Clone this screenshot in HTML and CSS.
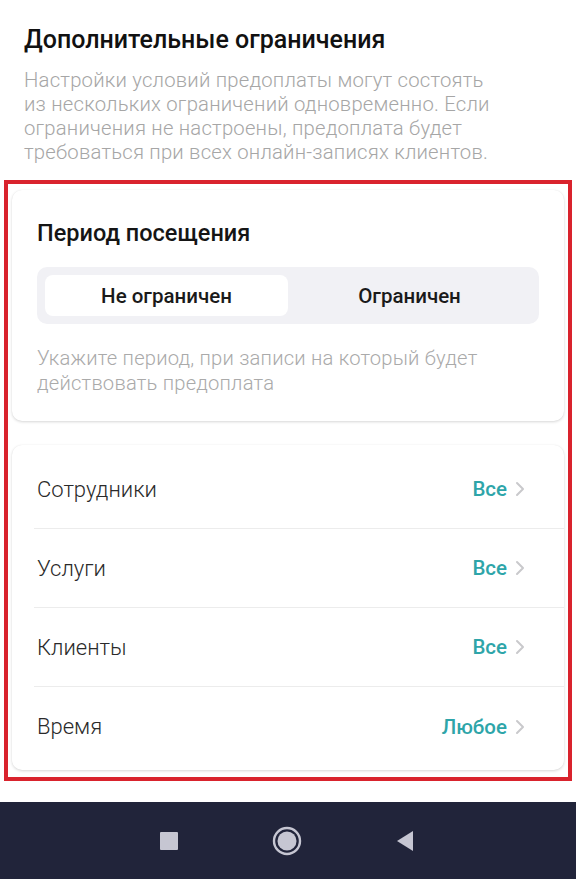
FILE: index.html
```html
<!DOCTYPE html>
<html lang="ru">
<head>
<meta charset="utf-8">
<link rel="stylesheet" href="styles.css">
</head>
<body>
<div class="page">
  <section class="intro">
    <h1 class="intro-title">Дополнительные ограничения</h1>
    <p class="intro-text">Настройки условий предоплаты могут состоять из нескольких ограничений одновременно. Если ограничения не настроены, предоплата будет требоваться при всех онлайн-записях клиентов.</p>
  </section>
  <div class="frame">
    <div class="card period">
      <h2 class="period-title">Период посещения</h2>
      <div class="segment">
        <div class="seg-item seg-active">Не ограничен</div>
        <div class="seg-item">Ограничен</div>
      </div>
      <p class="period-hint">Укажите период, при записи на который будет действовать предоплата</p>
    </div>
    <div class="card list">
      <div class="row">
        <span class="row-label">Сотрудники</span>
        <span class="row-value">Все</span>
        <svg class="chev" width="10" height="16" viewBox="0 0 10 16"><path d="M2 2 L8 8 L2 14" fill="none" stroke="#c9c9cc" stroke-width="2" stroke-linecap="round" stroke-linejoin="round"/></svg>
      </div>
      <div class="row">
        <span class="row-label">Услуги</span>
        <span class="row-value">Все</span>
        <svg class="chev" width="10" height="16" viewBox="0 0 10 16"><path d="M2 2 L8 8 L2 14" fill="none" stroke="#c9c9cc" stroke-width="2" stroke-linecap="round" stroke-linejoin="round"/></svg>
      </div>
      <div class="row">
        <span class="row-label">Клиенты</span>
        <span class="row-value">Все</span>
        <svg class="chev" width="10" height="16" viewBox="0 0 10 16"><path d="M2 2 L8 8 L2 14" fill="none" stroke="#c9c9cc" stroke-width="2" stroke-linecap="round" stroke-linejoin="round"/></svg>
      </div>
      <div class="row">
        <span class="row-label">Время</span>
        <span class="row-value">Любое</span>
        <svg class="chev" width="10" height="16" viewBox="0 0 10 16"><path d="M2 2 L8 8 L2 14" fill="none" stroke="#c9c9cc" stroke-width="2" stroke-linecap="round" stroke-linejoin="round"/></svg>
      </div>
    </div>
  </div>
  <nav class="navbar">
    <svg width="20" height="20" viewBox="0 0 20 20"><rect x="1" y="1" width="18" height="18" rx="1" fill="#c6c6d2"/></svg>
    <svg width="30" height="30" viewBox="0 0 30 30"><circle cx="15" cy="15" r="13" fill="none" stroke="#c6c6d2" stroke-width="2.4"/><circle cx="15" cy="15" r="9.5" fill="#c6c6d2"/></svg>
    <svg width="20" height="22" viewBox="0 0 20 22"><path d="M18 1 L18 21 L2 11 Z" fill="#c6c6d2"/></svg>
  </nav>
</div>
</body>
</html>
```
FILE: styles.css
```css
* { box-sizing: border-box; }
html, body { margin: 0; padding: 0; background: #ffffff; }
body { font-family: Roboto, "Noto Sans", sans-serif; width: 576px; height: 879px; overflow: hidden; }
.page { display: flex; flex-direction: column; height: 879px; }
.intro { padding: 26px 24px 0 24px; }
.intro-title { margin: 0; font-size: 25px; line-height: 28px; font-weight: 500; color: #111111; }
.intro-text { margin: 14px 0 0 0; font-size: 20.3px; line-height: 24px; font-weight: 300; letter-spacing: 0.2px; color: #a6a6a6; width: 480px; }
.frame { margin: 16px 4px 0 4px; border: 4px solid #d9232d; padding: 6px 4px 7px 4px; display: flex; flex-direction: column; gap: 24px; }
.card { background: #ffffff; border-radius: 10px; box-shadow: 0 1px 3px rgba(0,0,0,0.16), 0 0 1px rgba(0,0,0,0.06); }
.period { padding: 29px 25px 25px 25px; }
.period-title { margin: 0; font-size: 23.5px; line-height: 28px; font-weight: 500; color: #151515; }
.segment { margin-top: 20px; height: 57px; background: #f1f1f5; border-radius: 10px; padding: 8px; display: flex; }
.seg-item { flex: 1; display: flex; align-items: center; justify-content: center; font-size: 20.5px; font-weight: 500; color: #1a1a1a; border-radius: 8px; }
.seg-active { background: #ffffff; }
.period-hint { margin: 22px 0 0 0; font-size: 20.2px; line-height: 25px; font-weight: 300; letter-spacing: 0.2px; color: #aaaaaa; }
.list { padding: 5px 0 4px 22px; }
.row { height: 79px; display: flex; align-items: center; padding: 0 39px 0 3px; border-bottom: 1px solid #ececec; }
.row:last-child { border-bottom: none; }
.row-label { flex: 1; font-size: 22px; font-weight: 300; color: #2a2a2a; }
.row-value { font-size: 20.5px; font-weight: 500; color: #2ea5a9; }
.chev { margin-left: 8px; }
.navbar { margin-top: auto; height: 77px; background: #21243a; display: flex; align-items: center; justify-content: center; gap: 93px; padding-right: 2px; }
```
